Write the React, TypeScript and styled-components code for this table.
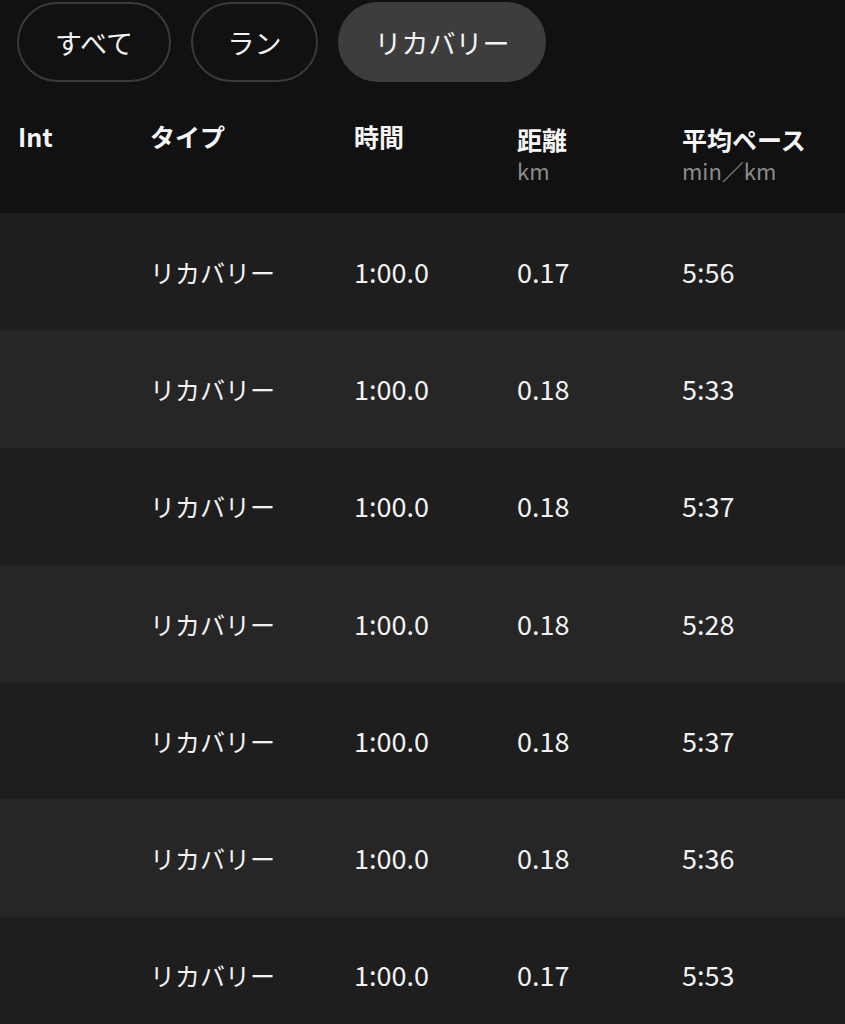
import React from "react";
import styled, { createGlobalStyle } from "styled-components";

const Global = createGlobalStyle`
  html, body { margin: 0; padding: 0; background: #111111; }
  body { font-family: "Noto Sans CJK JP", "Noto Sans", sans-serif; color: #f2f2f2; }
`;

const Page = styled.div`
  width: 845px;
  height: 1024px;
  overflow: hidden;
  background: #111111;
`;

const FilterBar = styled.div`
  display: flex;
  gap: 20px;
  padding: 2px 0 0 17px;
  height: 82px;
  box-sizing: border-box;
`;

const Pill = styled.div<{ $active?: boolean; $w: number }>`
  width: ${(p) => p.$w}px;
  height: 80px;
  box-sizing: border-box;
  border-radius: 40px;
  border: 2px solid ${(p) => (p.$active ? "#3d3d3d" : "#3a3a3a")};
  background: ${(p) => (p.$active ? "#3d3d3d" : "transparent")};
  display: flex;
  align-items: center;
  justify-content: center;
  font-size: 27px;
  font-weight: 400;
  color: #f2f2f2;
`;

const cols = "132px 204px 163px 165px 1fr";

const Header = styled.div`
  display: grid;
  grid-template-columns: ${cols};
  padding: 38px 0 0 18px;
  height: 131px;
  box-sizing: border-box;
`;

const HeadCell = styled.div<{ $low?: boolean }>`
  display: flex;
  flex-direction: column;
  padding-top: ${(p) => (p.$low ? 3 : 0)}px;
`;

const HeadTitle = styled.div`
  font-size: 25px;
  font-weight: 700;
  line-height: 32px;
  color: #f5f5f5;
`;

const HeadSub = styled.div`
  font-size: 22px;
  font-weight: 400;
  line-height: 30px;
  color: #8b8b8b;
`;

const Row = styled.div<{ $alt: boolean }>`
  display: grid;
  grid-template-columns: ${cols};
  align-items: center;
  height: 117.3px;
  padding-left: 18px;
  background: ${(p) => (p.$alt ? "#262626" : "#1e1e1e")};
  color: #f2f2f2;
`;

const Cell = styled.div<{ $num?: boolean }>`
  font-size: ${(p) => (p.$num ? 27 : 25)}px;
  font-weight: 400;
  line-height: 32px;
`;

const rows = [
  ["0.17", "5:56"],
  ["0.18", "5:33"],
  ["0.18", "5:37"],
  ["0.18", "5:28"],
  ["0.18", "5:37"],
  ["0.18", "5:36"],
  ["0.17", "5:53"],
];

export default function App() {
  return (
    <Page>
      <Global />
      <FilterBar>
        <Pill $w={154}>すべて</Pill>
        <Pill $w={127}>ラン</Pill>
        <Pill $w={208} $active>リカバリー</Pill>
      </FilterBar>
      <Header>
        <HeadCell><HeadTitle>Int</HeadTitle></HeadCell>
        <HeadCell><HeadTitle>タイプ</HeadTitle></HeadCell>
        <HeadCell><HeadTitle>時間</HeadTitle></HeadCell>
        <HeadCell $low>
          <HeadTitle>距離</HeadTitle>
          <HeadSub>km</HeadSub>
        </HeadCell>
        <HeadCell $low>
          <HeadTitle>平均ペース</HeadTitle>
          <HeadSub>min／km</HeadSub>
        </HeadCell>
      </Header>
      {rows.map((r, i) => (
        <Row key={i} $alt={i % 2 === 1}>
          <Cell />
          <Cell>リカバリー</Cell>
          <Cell $num>1:00.0</Cell>
          <Cell $num>{r[0]}</Cell>
          <Cell $num>{r[1]}</Cell>
        </Row>
      ))}
    </Page>
  );
}
